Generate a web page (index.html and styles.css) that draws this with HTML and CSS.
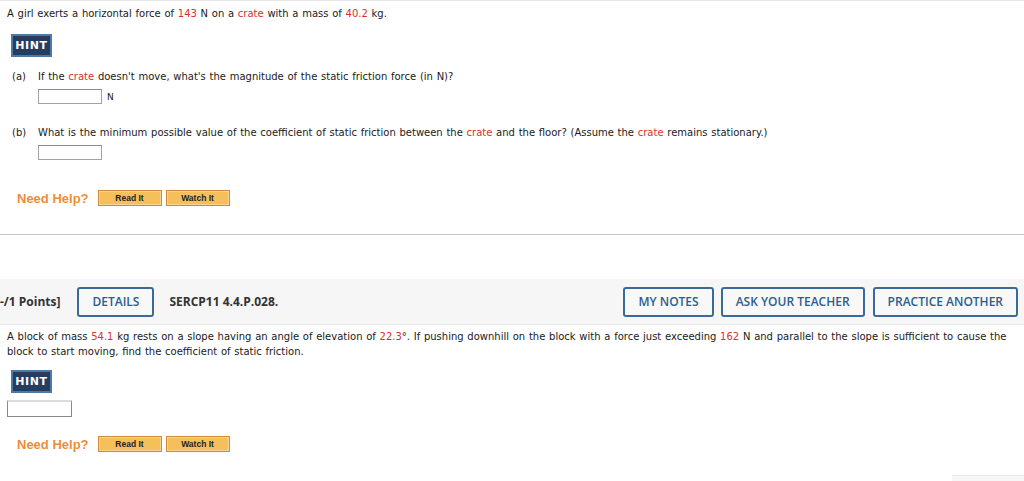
FILE: index.html
```html
<!DOCTYPE html>
<html>
<head>
<meta charset="utf-8">
<link rel="stylesheet" href="styles.css">
</head>
<body>
<section class="q1">
  <p class="stem">A girl exerts a horizontal force of <span class="var">143</span> N on a <span class="var">crate</span> with a mass of <span class="var">40.2</span> kg.</p>
  <div class="hint">HINT</div>
  <div class="part"><span class="lbl">(a)</span><span>If the <span class="var">crate</span> doesn't move, what's the magnitude of the static friction force (in N)?</span></div>
  <div class="answer"><span class="box"></span><span class="unit">N</span></div>
  <div class="part part-b"><span class="lbl">(b)</span><span>What is the minimum possible value of the coefficient of static friction between the <span class="var">crate</span> and the floor? (Assume the <span class="var">crate</span> remains stationary.)</span></div>
  <div class="answer"><span class="box"></span></div>
  <div class="help"><span class="need">Need Help?</span><span class="rbtn">Read It</span><span class="rbtn">Watch It</span></div>
</section>
<hr class="sep">
<div class="band">
  <span class="points">[-/1 Points]</span>
  <span class="obtn">DETAILS</span>
  <span class="code">SERCP11 4.4.P.028.</span>
  <span class="spacer"></span>
  <span class="obtn">MY NOTES</span>
  <span class="obtn obtn-ask">ASK YOUR TEACHER</span>
  <span class="obtn">PRACTICE ANOTHER</span>
</div>
<section class="q2">
  <p class="stem2">A block of mass <span class="var">54.1</span> kg rests on a slope having an angle of elevation of <span class="var">22.3</span>°. If pushing downhill on the block with a force just exceeding <span class="var">162</span> N and parallel to the slope is sufficient to cause the block to start moving, find the coefficient of static friction.</p>
  <div class="hint hint2">HINT</div>
  <div class="answer2"><span class="box box2"></span></div>
  <div class="help help2"><span class="need">Need Help?</span><span class="rbtn">Read It</span><span class="rbtn">Watch It</span></div>
</section>
<div class="thumb"></div>
</body>
</html>
```
FILE: styles.css
```css
html, body {
  margin: 0;
  padding: 0;
  background: #ffffff;
}
body {
  width: 1024px;
  height: 481px;
  overflow: hidden;
  position: relative;
  font-family: "DejaVu Sans", Verdana, sans-serif;
  font-size: 10px;
  word-spacing: 0.55px;
  color: #1a1a1a;
  border-top: 1px solid #e6e6e6;
  box-sizing: border-box;
}
.var { color: #d8312b; }
.q1 {
  padding: 0 7px;
}
.stem {
  margin: 5px 0 0;
  line-height: 15px;
}
.hint {
  margin: 13px 0 0 4px;
  width: 37px;
  height: 19px;
  border: 2px solid #4e78a7;
  background: #243d60;
  color: #ffffff;
  font-family: "DejaVu Sans", Verdana, sans-serif;
  font-weight: bold;
  font-size: 11px;
  letter-spacing: 0.6px;
  display: flex;
  align-items: center;
  justify-content: center;
}
.part {
  margin: 12px 0 0 5px;
  line-height: 15px;
  display: flex;
}
.part-b { margin-top: 21px; }
.lbl {
  width: 26px;
  flex: none;
}
.answer {
  margin: 5px 0 0 31px;
  display: flex;
  align-items: center;
  height: 15px;
}
.box {
  width: 62px;
  height: 13px;
  border: 1px solid #a3a3a3;
  border-top-color: #8c8c8c;
  background: #fff;
  display: block;
}
.unit {
  margin-left: 5px;
  font-size: 9px;
  color: #222;
}
.help {
  margin: 30px 0 0 10px;
  display: flex;
  align-items: center;
  height: 16px;
}
.need {
  font-family: "Liberation Sans", Arial, sans-serif;
  font-size: 13px;
  font-weight: bold;
  color: #e98e3a;
  margin-right: 9px;
  word-spacing: 0;
}
.rbtn {
  width: 62px;
  height: 14px;
  border: 1px solid #d18a3c;
  box-shadow: inset 0 0 0 1px #f8d58e;
  background: #f5c05c;
  font-family: "Liberation Sans", Arial, sans-serif;
  font-weight: bold;
  font-size: 8.5px;
  word-spacing: 0;
  color: #222;
  display: flex;
  align-items: center;
  justify-content: center;
  margin-right: 4px;
}
.sep {
  margin: 28px 0 0;
  border: 0;
  height: 1px;
  background: #c6c6c6;
}
.band {
  margin-top: 44px;
  height: 45px;
  background: #f6f6f6;
  border-bottom: 1px solid #e9e9e9;
  display: flex;
  align-items: center;
  font-family: "Open Sans", sans-serif;
  font-size: 12px;
  word-spacing: 0;
  padding-right: 6px;
}
.points {
  font-weight: bold;
  color: #333;
  margin-left: -4px;
  margin-right: 17px;
  white-space: nowrap;
}
.obtn {
  height: 26px;
  border: 2px solid #3a6a9a;
  border-radius: 3px;
  color: #2c5d8d;
  font-weight: 600;
  padding: 0 13px;
  display: flex;
  align-items: center;
  white-space: nowrap;
  margin-right: 7px;
  background: #f8f8f8;
}
.obtn-ask { margin-right: 8px; }
.obtn:last-child { margin-right: 0; }
.code {
  font-weight: bold;
  color: #333;
  margin-left: 8px;
}
.spacer { flex: 1; }
.q2 {
  padding: 0 7px;
}
.stem2 {
  margin: 4px 0 0;
  line-height: 15px;
  width: 1006px;
}
.hint2 { margin-top: 11px; }
.answer2 {
  margin-top: 7px;
  height: 16px;
}
.box2 {
  width: 63px;
  height: 14px;
  border-top: 2px solid #dcdcdc;
  border-left-color: #8a8a8a;
  border-right-color: #8a8a8a;
  border-bottom-color: #8a8a8a;
}
.help2 { margin-top: 20px; }
.thumb {
  position: absolute;
  right: 0;
  bottom: 0;
  width: 72px;
  height: 5px;
  background: #f6f6f6;
  border-top: 1px solid #ececec;
  box-shadow: -20px -10px 40px rgba(0,0,0,0.03);
}
```
